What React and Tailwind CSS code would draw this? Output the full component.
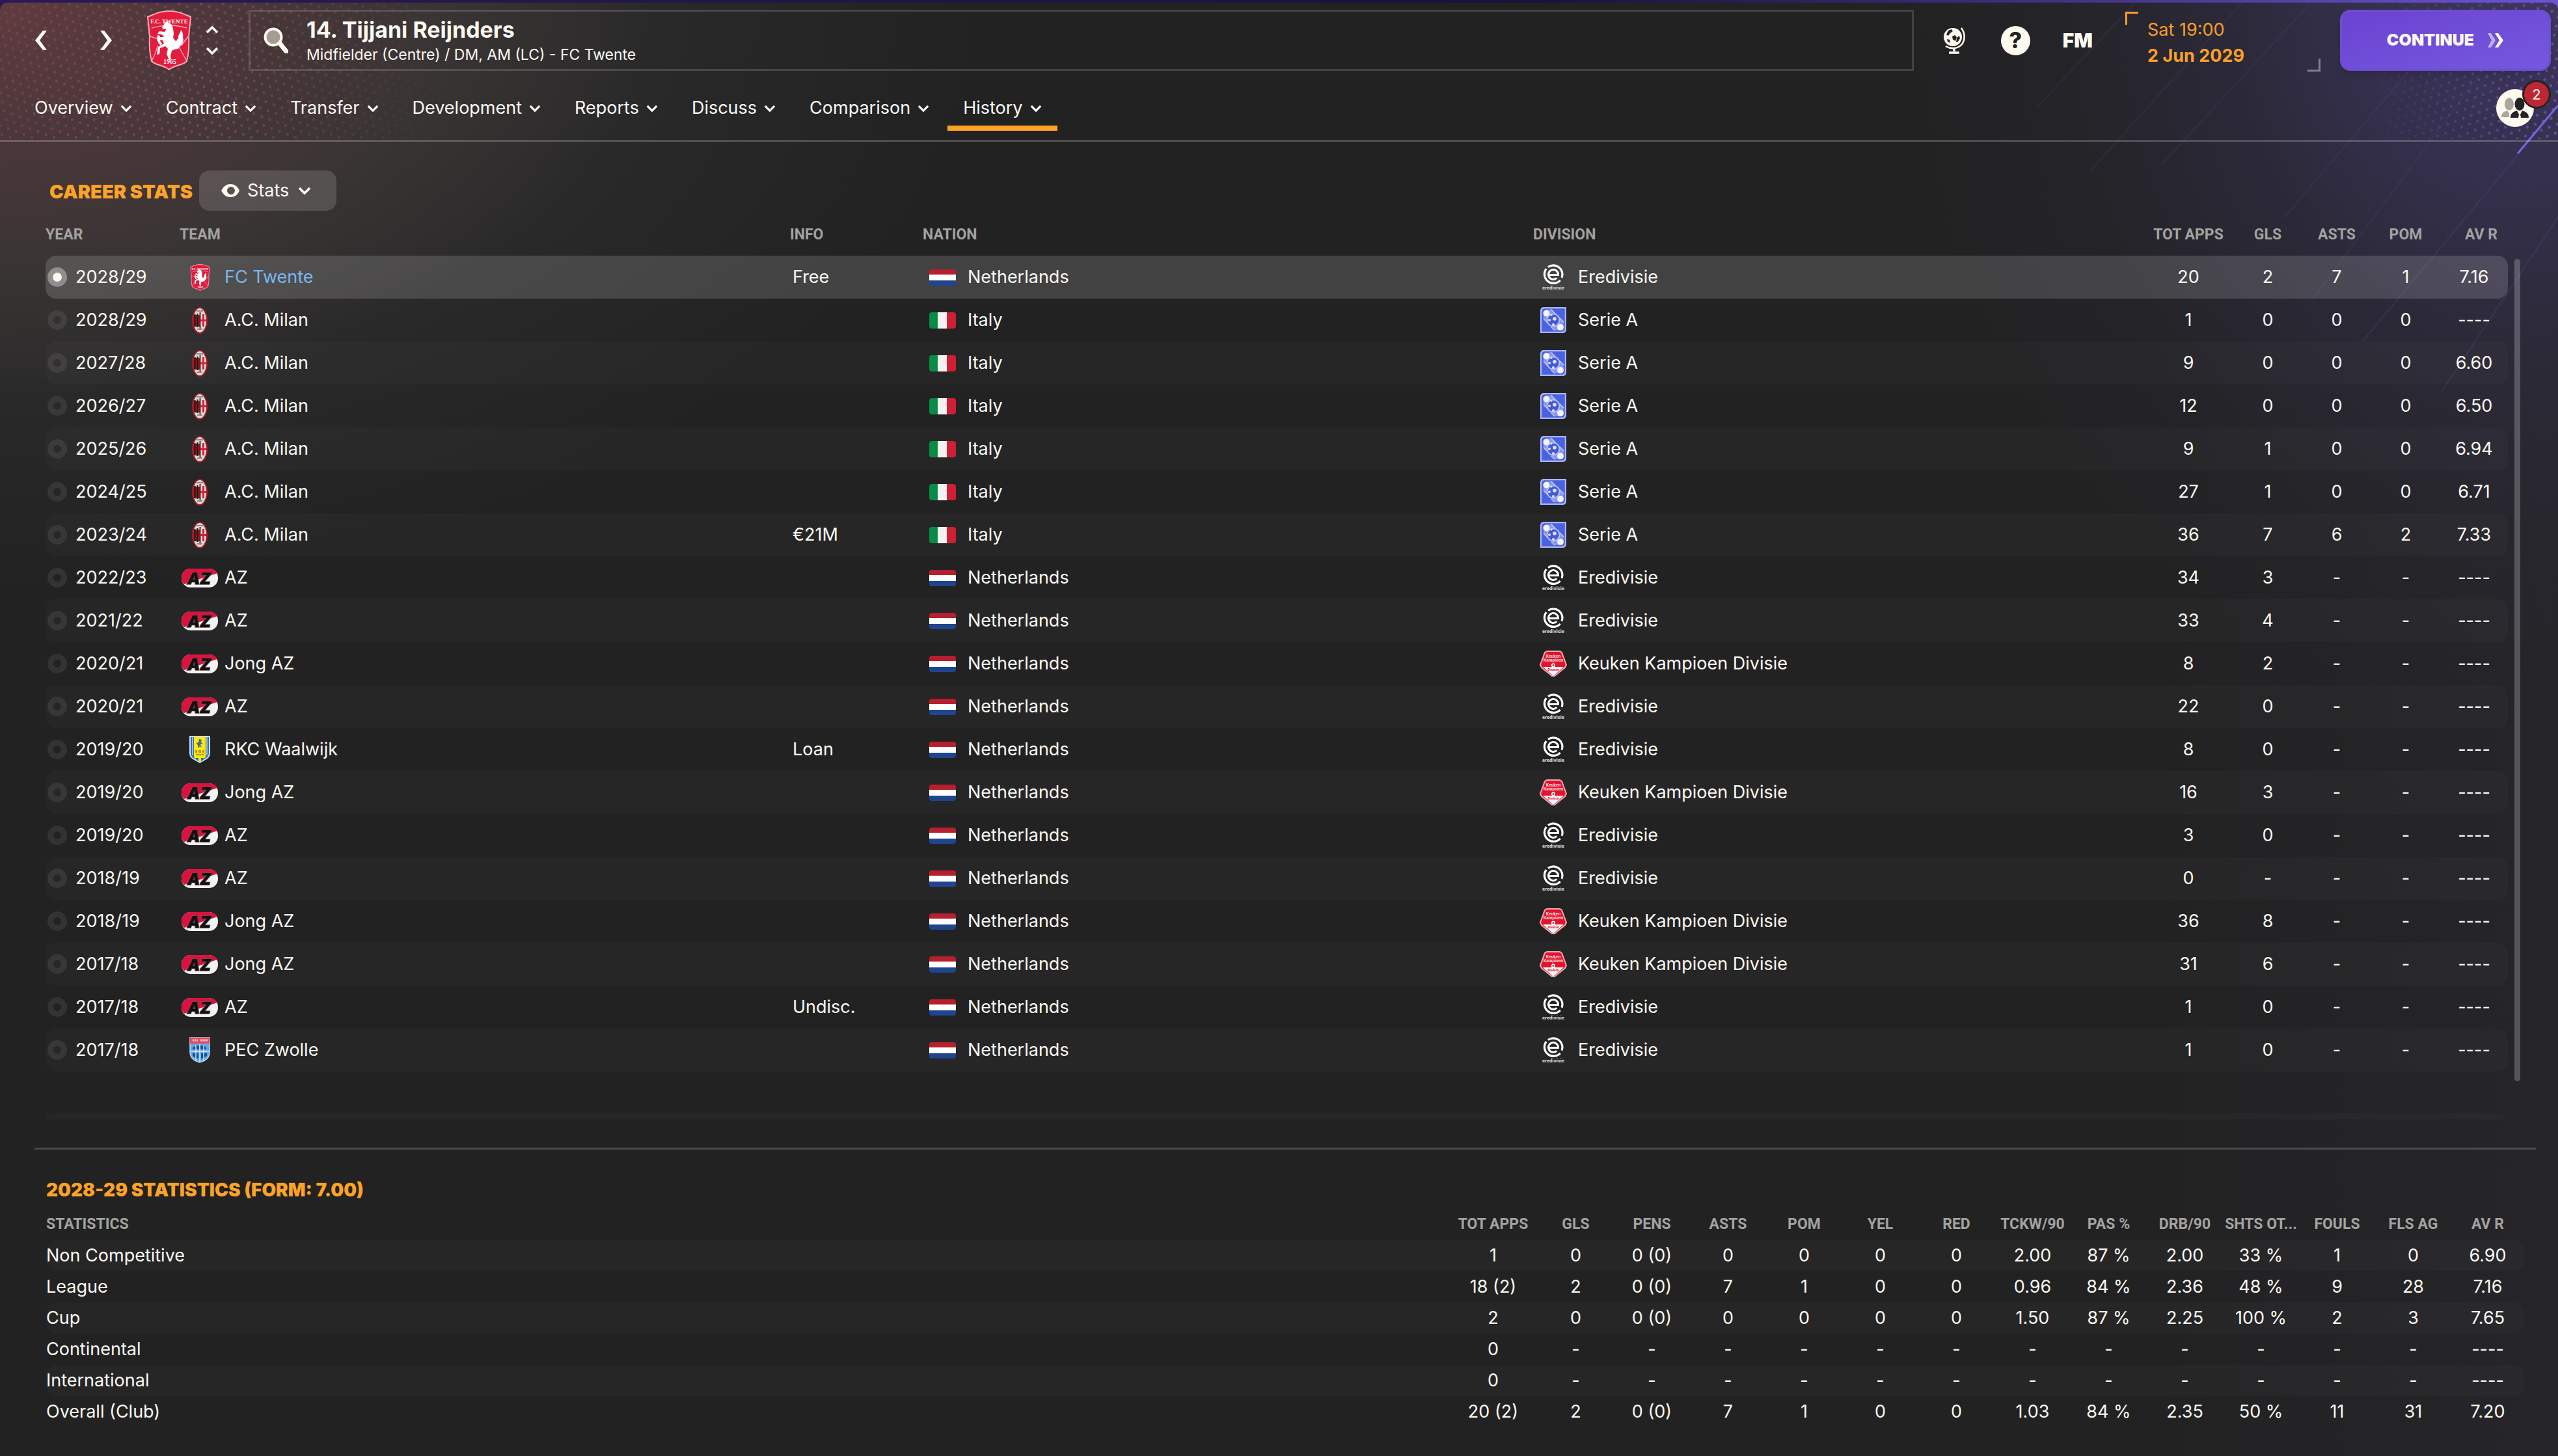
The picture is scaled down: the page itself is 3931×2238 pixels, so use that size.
import { useState } from 'react';

const CAREER = [
  { year: '2028/29', team: 'FC Twente', club: 'twente', info: 'Free', nation: 'Netherlands', division: 'Eredivisie', stats: ['20', '2', '7', '1', '7.16'] },
  { year: '2028/29', team: 'A.C. Milan', club: 'milan', info: '', nation: 'Italy', division: 'Serie A', stats: ['1', '0', '0', '0', '----'] },
  { year: '2027/28', team: 'A.C. Milan', club: 'milan', info: '', nation: 'Italy', division: 'Serie A', stats: ['9', '0', '0', '0', '6.60'] },
  { year: '2026/27', team: 'A.C. Milan', club: 'milan', info: '', nation: 'Italy', division: 'Serie A', stats: ['12', '0', '0', '0', '6.50'] },
  { year: '2025/26', team: 'A.C. Milan', club: 'milan', info: '', nation: 'Italy', division: 'Serie A', stats: ['9', '1', '0', '0', '6.94'] },
  { year: '2024/25', team: 'A.C. Milan', club: 'milan', info: '', nation: 'Italy', division: 'Serie A', stats: ['27', '1', '0', '0', '6.71'] },
  { year: '2023/24', team: 'A.C. Milan', club: 'milan', info: '€21M', nation: 'Italy', division: 'Serie A', stats: ['36', '7', '6', '2', '7.33'] },
  { year: '2022/23', team: 'AZ', club: 'az', info: '', nation: 'Netherlands', division: 'Eredivisie', stats: ['34', '3', '-', '-', '----'] },
  { year: '2021/22', team: 'AZ', club: 'az', info: '', nation: 'Netherlands', division: 'Eredivisie', stats: ['33', '4', '-', '-', '----'] },
  { year: '2020/21', team: 'Jong AZ', club: 'az', info: '', nation: 'Netherlands', division: 'Keuken Kampioen Divisie', stats: ['8', '2', '-', '-', '----'] },
  { year: '2020/21', team: 'AZ', club: 'az', info: '', nation: 'Netherlands', division: 'Eredivisie', stats: ['22', '0', '-', '-', '----'] },
  { year: '2019/20', team: 'RKC Waalwijk', club: 'rkc', info: 'Loan', nation: 'Netherlands', division: 'Eredivisie', stats: ['8', '0', '-', '-', '----'] },
  { year: '2019/20', team: 'Jong AZ', club: 'az', info: '', nation: 'Netherlands', division: 'Keuken Kampioen Divisie', stats: ['16', '3', '-', '-', '----'] },
  { year: '2019/20', team: 'AZ', club: 'az', info: '', nation: 'Netherlands', division: 'Eredivisie', stats: ['3', '0', '-', '-', '----'] },
  { year: '2018/19', team: 'AZ', club: 'az', info: '', nation: 'Netherlands', division: 'Eredivisie', stats: ['0', '-', '-', '-', '----'] },
  { year: '2018/19', team: 'Jong AZ', club: 'az', info: '', nation: 'Netherlands', division: 'Keuken Kampioen Divisie', stats: ['36', '8', '-', '-', '----'] },
  { year: '2017/18', team: 'Jong AZ', club: 'az', info: '', nation: 'Netherlands', division: 'Keuken Kampioen Divisie', stats: ['31', '6', '-', '-', '----'] },
  { year: '2017/18', team: 'AZ', club: 'az', info: 'Undisc.', nation: 'Netherlands', division: 'Eredivisie', stats: ['1', '0', '-', '-', '----'] },
  { year: '2017/18', team: 'PEC Zwolle', club: 'pec', info: '', nation: 'Netherlands', division: 'Eredivisie', stats: ['1', '0', '-', '-', '----'] },
];

const SEASON_COLS = ['TOT APPS', 'GLS', 'PENS', 'ASTS', 'POM', 'YEL', 'RED', 'TCKW/90', 'PAS %', 'DRB/90', 'SHTS OT...', 'FOULS', 'FLS AG', 'AV R'];

const SEASON = [
  ['Non Competitive', '1', '0', '0 (0)', '0', '0', '0', '0', '2.00', '87 %', '2.00', '33 %', '1', '0', '6.90'],
  ['League', '18 (2)', '2', '0 (0)', '7', '1', '0', '0', '0.96', '84 %', '2.36', '48 %', '9', '28', '7.16'],
  ['Cup', '2', '0', '0 (0)', '0', '0', '0', '0', '1.50', '87 %', '2.25', '100 %', '2', '3', '7.65'],
  ['Continental', '0', '-', '-', '-', '-', '-', '-', '-', '-', '-', '-', '-', '-', '----'],
  ['International', '0', '-', '-', '-', '-', '-', '-', '-', '-', '-', '-', '-', '-', '----'],
  ['Overall (Club)', '20 (2)', '2', '0 (0)', '7', '1', '0', '0', '1.03', '84 %', '2.35', '50 %', '11', '31', '7.20'],
];

const TABS = ['Overview', 'Contract', 'Transfer', 'Development', 'Reports', 'Discuss', 'Comparison', 'History'];

/* ---------- small icons ---------- */

function Chevron({ className }) {
  return (
    <svg viewBox="0 0 20 12" className={className} fill="none" stroke="currentColor" strokeWidth="3.6">
      <path d="M2 2l8 8 8-8" />
    </svg>
  );
}

function Arrow({ className }) {
  return (
    <svg viewBox="0 0 20 30" className={className} fill="currentColor">
      <path d="M13 0h6L8 15l11 15h-6L1 15z" />
    </svg>
  );
}

function SearchIcon() {
  return (
    <svg viewBox="0 0 38 40" className="h-10 w-[38px]">
      <circle cx="15" cy="15" r="12.5" fill="#a39d95" stroke="#fffaf0" strokeWidth="4" />
      <path d="M26 26l9 11" stroke="#fffaf0" strokeWidth="7" strokeLinecap="round" />
    </svg>
  );
}

function GlobeIcon() {
  return (
    <svg viewBox="0 0 35 42" className="h-[42px] w-[35px]">
      <circle cx="15" cy="16" r="14" fill="#fffaf0" />
      <path d="M8 6l5-2 2 3-4 3-3 4-3-2zM14 15l4-2 3 3-2 6-4-2zM21 17l4-3 1 4-3 5-3 1zM6 19l4 1 1 5-4-2z" fill="#232324" />
      <path d="M28 2c6 8 6 18 1 25-6 7-17 8-25 3" fill="none" stroke="#fffaf0" strokeWidth="2.6" />
      <path d="M17 32v6M9 40h16" stroke="#fffaf0" strokeWidth="3.4" />
    </svg>
  );
}

function PeopleIcon() {
  return (
    <svg viewBox="0 0 44 32" className="h-8 w-11">
      <g fill="#aca69c">
        <ellipse cx="13" cy="10" rx="7" ry="9.5" />
        <path d="M1 30c0-6 4-9 9-10l3 4v6z" />
      </g>
      <g fill="#232324">
        <ellipse cx="29" cy="10" rx="7.5" ry="10" />
        <path d="M15 31c0-7 4-9 10-11l3 6-1 5zM43 31c0-7-4-9-10-11l-3 6 1 5z" />
      </g>
    </svg>
  );
}

function EyeIcon() {
  return (
    <svg viewBox="0 0 28 20" className="h-5 w-7">
      <path fillRule="evenodd" fill="#fffaf0" d="M0 10C4 3 8 0 14 0s11 3 14 10c-3 7-8 10-14 10S4 17 0 10zm15-6a6 6 0 1 0 0 12 6 6 0 0 0 0-12z" />
    </svg>
  );
}

/* ---------- club crests ---------- */

function TwenteCrest({ className }) {
  return (
    <svg viewBox="0 0 70 92" className={className}>
      <path d="M2 10C14 5 22 1 35 1s21 4 33 9l-3 30c1 16 0 26-3 38-6 7-20 6-27 13C28 84 14 85 8 78 5 66 4 56 5 40z" fill="#e31b3c" stroke="#f5aab6" strokeWidth="2" />
      <path d="M8 27c17-5 37-5 54 0M8 78c4-8 8-16 9-24M62 78c-4-8-8-14-12-22M6 40l12 4M64 40l-10 14" fill="none" stroke="#f5aab6" strokeWidth="1.4" />
      <text x="35" y="20" textAnchor="middle" fontSize="9" fontWeight="700" fontFamily="Liberation Serif, serif" fill="#fff">F.C. TWENTE</text>
      <text x="36" y="82" textAnchor="middle" fontSize="10" fontWeight="700" fontFamily="Liberation Serif, serif" fill="#fff">1965</text>
      <path d="M36 20l3 2 2 6 1 8-1 6 4 5 5 1 2 6-3 5-6 1-4 2-2 8 1 5-3 1-4-9 2-8-4-4-8 3-1 9-4 1 2-12 9-5-2-5-8-1 2-4 8 0-3-4-7-1 3-4 8 1 3-5-5 1-2-3 6-9z" fill="#fff" />
      <path d="M48 57c8-3 10-10 8-16 1-6-1-8-3-11-1 6-5 8-4 13-4 3-5 8-1 14zM17 38c-2 6 0 12 5 16l2-3c-3-3-4-7-3-12z" fill="#fff" />
    </svg>
  );
}

function MilanCrest() {
  return (
    <svg viewBox="0 0 24 41" className="h-[41px] w-6">
      <ellipse cx="12" cy="20.5" rx="11" ry="19.5" fill="#dcdad7" stroke="#a81d29" strokeWidth="2" />
      <path d="M3 12h9v18H3c-2-6-2-12 0-18z" fill="#a01722" />
      <path d="M4.500 11v19M8.500 10v21" stroke="#1b1416" strokeWidth="2" />
      <path d="M12.500 8v25" stroke="#3b2326" strokeWidth="1.8" />
      <path d="M17.500 11v19M13 20.500h9" stroke="#dc1f30" strokeWidth="3" />
      <path d="M7 6h10M8 34h8" stroke="#8c8886" strokeWidth="2" />
    </svg>
  );
}

function AzCrest() {
  return (
    <svg viewBox="0 0 56 29" className="h-[29px] w-14">
      <rect x="0" y="0" width="56" height="29" rx="14" fill="#f4f1f1" />
      <path d="M14 0h28c6 0 11 3 13 7L4 24C1 21 0 18 0 14 0 6 6 0 14 0z" fill="#d9123f" />
      <text x="27" y="24" textAnchor="middle" fontSize="24" fontWeight="900" fontStyle="italic" fontFamily="Inter, sans-serif" fill="#111" stroke="#6b4a4a" strokeWidth="1.5" paintOrder="stroke">AZ</text>
    </svg>
  );
}

function RkcCrest() {
  return (
    <svg viewBox="0 0 32 42" className="h-[42px] w-8">
      <path d="M1 1h30v26c0 8-8 9-15 14C9 36 1 35 1 27z" fill="#2f6db5" stroke="#cfe0ea" strokeWidth="2" />
      <path d="M5 2v28M27 2v28" stroke="#e5eef2" strokeWidth="1.2" />
      <path d="M7 2h18v31l-9 7-9-7z" fill="#ffe80f" />
      <path d="M15 5l4 1-1 4 3 2-4 1 2 5-3-2-3 3 0-5-3-2 4-2z" fill="#4c6a8e" />
      <path d="M9 22h3v4H9zM14 22h4v4h-4zM20 22h3v4h-3z" fill="#a89b3a" />
      <path d="M10 29h12" stroke="#b8a620" strokeWidth="2.4" />
      <path d="M10 34h4v5l-4-3zM18 34h4l0 2-4 3z" fill="#2f6db5" />
    </svg>
  );
}

function PecCrest() {
  return (
    <svg viewBox="0 0 32 40" className="h-10 w-8">
      <path d="M1 1h30v22c0 9-7 14-15 16C8 37 1 32 1 23z" fill="#5aa9ea" stroke="#b9d9ee" strokeWidth="1.5" />
      <path d="M1 1h30v9H1z" fill="#ea4a5e" />
      <path d="M5 5h9M17 5h11" stroke="#f9c7cd" strokeWidth="3" strokeDasharray="2 1" />
      <path d="M11 13h4v6H5v-3zM17 13h5l4 3v3h-9zM5 25h9v8h-3l-6-4zM18 25h9v4l-6 4h-3z" fill="#1d4f94" />
      <path d="M16 11v27M2 22h28M10 12v24M22 12v24" stroke="#dcecf8" strokeWidth="1.4" />
    </svg>
  );
}

function ClubCrest({ club }) {
  if (club === 'twente') return <TwenteCrest className="h-[41px] w-[33px]" />;
  if (club === 'milan') return <MilanCrest />;
  if (club === 'az') return <AzCrest />;
  if (club === 'rkc') return <RkcCrest />;
  return <PecCrest />;
}

/* ---------- flags and competition logos ---------- */

function Flag({ nation }) {
  if (nation === 'Italy') {
    return (
      <svg viewBox="0 0 41 25" className="h-[25px] w-[41px] rounded">
        <path d="M0 0h13v25H0z" fill="#078b47" />
        <path d="M13 0h14v25H13z" fill="#f4f2f0" />
        <path d="M27 0h14v25H27z" fill="#cd2034" />
      </svg>
    );
  }
  return (
    <svg viewBox="0 0 41 25" className="h-[25px] w-[41px] rounded">
      <path d="M0 0h41v8H0z" fill="#b51f2e" />
      <path d="M0 8h41v9H0z" fill="#fff" />
      <path d="M0 17h41v8H0z" fill="#1f458f" />
    </svg>
  );
}

function DivisionLogo({ division }) {
  if (division === 'Eredivisie') {
    return (
      <svg viewBox="0 0 38 42" className="h-[42px] w-[38px]" fill="none" stroke="#fff">
        <path d="M11 5.500A14 14 0 0 1 32.200 21.800M29.700 26A14 14 0 0 1 8.300 8" strokeWidth="3.2" />
        <path d="M13 17.500h13.500A7.500 7.500 0 1 0 24.300 22.300" strokeWidth="3" />
        <text x="19" y="40" textAnchor="middle" fontSize="7" fontWeight="800" fontFamily="Inter, sans-serif" fill="#cfcfcf" stroke="none">eredivisie</text>
      </svg>
    );
  }
  if (division === 'Serie A') {
    return (
      <svg viewBox="0 0 40 40" className="size-10">
        <path d="M7 1h32v32c0 4-2 6-6 6H1V7c0-4 2-6 6-6z" fill="#4a62e0" stroke="#a9b4f3" strokeWidth="2.5" />
        <path d="M5 6l12-3 19 19-1 13-12 1L5 18z" fill="#8b99ec" />
        <circle cx="9.5" cy="9.5" r="5" fill="#f3f5fb" />
        <circle cx="31" cy="31" r="5" fill="#f3f5fb" />
        <circle cx="20" cy="20" r="9.5" fill="#4459d6" stroke="#b4bef6" strokeWidth="2" />
        <circle cx="22" cy="18" r="2.8" fill="#dfe4fc" />
        <circle cx="14" cy="20" r="2" fill="#dfe4fc" />
        <circle cx="20" cy="27" r="2" fill="#dfe4fc" />
        <circle cx="17" cy="12" r="1.6" fill="#dfe4fc" />
        <path d="M17 4l6 6M30 17l6 6M5 18l6 6M17 31l5 5" stroke="#c7cff8" strokeWidth="1.4" />
      </svg>
    );
  }
  return (
    <svg viewBox="0 0 42 41" className="h-[41px] w-[42px]">
      <path d="M11 1h20l3 2 7 19-2 4-16 13h-4L3 26l-2-4L8 3z" fill="#e2132d" stroke="#e9a9b0" strokeWidth="2" />
      <path d="M5 25h32L22 38h-2z" fill="#fff" />
      <text x="21" y="11" textAnchor="middle" fontSize="6" fontWeight="800" fontFamily="Inter, sans-serif" fill="#fbd0d5">Keuken</text>
      <text x="21" y="17" textAnchor="middle" fontSize="6" fontWeight="800" fontFamily="Inter, sans-serif" fill="#fbd0d5">Kampioen</text>
      <text x="21" y="31" textAnchor="middle" fontSize="5" fontWeight="800" fontFamily="Inter, sans-serif" fill="#e2132d">Divisie</text>
      <circle cx="21" cy="22.5" r="3" fill="#fff" />
      <circle cx="21" cy="22.5" r="1.5" fill="#4d6b58" />
    </svg>
  );
}

/* ---------- backdrop: club colour glow left, purple glow right ---------- */

function Backdrop() {
  return (
    <div aria-hidden="true" className="pointer-events-none absolute inset-0 overflow-hidden">
      <div className="absolute left-0 top-0 h-[900px] w-[1500px] bg-[radial-gradient(farthest-side_at_0%_0%,#603b3fff_0%,#523a3de0_22%,#48403f99_46%,#38363655_68%,#22222300_100%)]" />
      <div className="absolute right-0 top-0 h-[1100px] w-[1000px] bg-[radial-gradient(farthest-side_at_100%_0%,#493d78ff_0%,#3d3560f0_22%,#2f2c42b0_50%,#28273066_76%,#22222300_100%)]" />
      <div className="absolute bottom-0 right-0 h-full w-[600px] bg-linear-to-l from-[#2c2a3460] to-[#22222300]" />
      <svg className="absolute left-0 top-0 h-[210px] w-[700px]">
        <defs>
          <pattern id="dotsL" width="22" height="14" patternUnits="userSpaceOnUse" patternTransform="rotate(-12)">
            <circle cx="5" cy="3" r="2.2" fill="#8d5266" />
            <circle cx="16" cy="10" r="2.2" fill="#8d5266" />
          </pattern>
          <linearGradient id="fadeL" x1="0" y1="0" x2="1" y2="0">
            <stop offset="0" stopColor="#fff" stopOpacity="0.4" />
            <stop offset="0.45" stopColor="#fff" stopOpacity="0.6" />
            <stop offset="1" stopColor="#fff" stopOpacity="0" />
          </linearGradient>
          <mask id="maskL"><rect width="700" height="210" fill="url(#fadeL)" /></mask>
        </defs>
        <rect width="700" height="210" fill="url(#dotsL)" mask="url(#maskL)" />
      </svg>
      <svg className="absolute right-0 top-0 h-[640px] w-[900px]" viewBox="0 0 900 640">
        <defs>
          <pattern id="dotsR" width="22" height="14" patternUnits="userSpaceOnUse" patternTransform="rotate(12)">
            <circle cx="5" cy="3" r="2.2" fill="#6a57c4" />
            <circle cx="16" cy="10" r="2.2" fill="#6a57c4" />
          </pattern>
          <linearGradient id="fadeR" x1="0" y1="0" x2="1" y2="0">
            <stop offset="0" stopColor="#fff" stopOpacity="0" />
            <stop offset="1" stopColor="#fff" stopOpacity="0.8" />
          </linearGradient>
          <mask id="maskR"><rect x="600" width="300" height="210" fill="url(#fadeR)" /></mask>
        </defs>
        <rect x="600" width="300" height="210" fill="url(#dotsR)" mask="url(#maskR)" />
        <g stroke="#6353b5" strokeWidth="2" fill="none">
          <path d="M250 0L100 160M415 0L180 260M520 0L290 250M700 70L480 330M780 110L520 460" opacity="0.14" />
          <path d="M900 160L600 520M900 330L720 600" opacity="0.22" />
          <path d="M900 158L838 232" stroke="#7a63e0" strokeWidth="3" />
        </g>
      </svg>
    </div>
  );
}

function Header() {
  return (
    <header className="relative border-b-3 border-white/20">
      <div className="flex items-stretch pl-[53px] pr-[11px] pt-[11px]">
        <div className="flex items-center">
          <button aria-label="Back"><Arrow className="h-[30px] w-5" /></button>
          <button aria-label="Forward" className="ml-20 mr-[52px]"><Arrow className="h-[30px] w-5 -scale-x-100" /></button>
          <TwenteCrest className="h-[92px] w-[70px]" />
          <div className="ml-5 mr-[45px] flex flex-col gap-5">
            <button aria-label="Previous player"><Chevron className="h-3 w-[22px] -scale-y-100" /></button>
            <button aria-label="Next player"><Chevron className="h-3 w-[22px]" /></button>
          </div>
        </div>

        <div className="flex flex-1 items-center gap-7 border-3 border-white/15 pl-5">
          <button aria-label="Search"><SearchIcon /></button>
          <div className="pt-1">
            <h1 className="text-[34px] leading-10 font-bold">14. Tijjani Reijnders</h1>
            <p className="text-[23px] leading-9">Midfielder (Centre) / DM, AM (LC) - FC Twente</p>
          </div>
        </div>

        <div className="flex items-center pl-[45px]">
          <button aria-label="World"><GlobeIcon /></button>
          <button aria-label="Help" className="ml-[54px] flex size-[45px] items-center justify-center rounded-full bg-[#fffaf0] text-[34px] leading-none font-extrabold text-[#232324]">?</button>
          <button className="ml-[50px] text-[30px] font-black">FM</button>
          <div className="relative ml-[50px] mr-[30px] w-[300px] pl-[34px] pt-2 text-[27px] leading-10 text-[#fba02a]">
            <span className="absolute left-0 top-0 size-5 border-l-3 border-t-3 border-[#fba02a]" />
            <p>Sat 19:00</p>
            <p className="font-bold">2 Jun 2029</p>
            <span className="absolute -bottom-1 right-0 size-5 border-b-3 border-r-3 border-white/40" />
          </div>
          <button className="flex h-[94px] w-[324px] items-center justify-center gap-5 rounded-2xl border-3 border-[#6a50cf] bg-linear-to-br from-[#6a43d0] to-[#7657e0] text-[25px] font-black shadow-lg">
            CONTINUE
            <svg viewBox="0 0 26 22" className="h-[22px] w-[26px]">
              <path d="M1 0h5l7 11-7 11H1l6-11z" fill="#b9b4f0" />
              <path d="M12 0h5l8 11-8 11h-5l7-11z" fill="#fffaf0" />
            </svg>
          </button>
        </div>
      </div>

      <div className="flex items-center justify-between pb-[14px] pl-[29px] pr-[37px] pt-[22px]">
        <nav className="flex gap-1">
          {TABS.map((tab) => (
            <a
              key={tab}
              href={`#${tab.toLowerCase()}`}
              className={`flex h-[70px] items-center gap-[11px] border-y-8 border-t-transparent px-6 text-[27px] ${tab === 'History' ? 'border-b-[#fca326]' : 'border-b-transparent'}`}
            >
              {tab}
              <Chevron className="h-[11px] w-[18px]" />
            </a>
          ))}
        </nav>
        <button aria-label="Social" className="relative flex size-[58px] items-center justify-center rounded-full bg-[#fffaf0]">
          <PeopleIcon />
          <span className="absolute -right-[26px] -top-[14px] flex size-[44px] items-center justify-center rounded-full border-3 border-[#232324] bg-[#bc2733] text-[22px]">2</span>
        </button>
      </div>
    </header>
  );
}

function CareerTable() {
  const [selected, setSelected] = useState(0);

  return (
    <table className="w-full flex-1 table-fixed border-separate border-spacing-0 text-[27px] leading-9">
      <colgroup>
        <col className="w-[206px]" />
        <col />
        <col className="w-[204px]" />
        <col />
        <col />
        <col className="w-[138px]" />
        <col className="w-[106px]" />
        <col className="w-[106px]" />
        <col className="w-[106px]" />
        <col className="w-[104px]" />
      </colgroup>
      <thead>
        <tr className="h-[69px] text-left font-[Roboto,sans-serif] text-[23px] text-[#a3a2a0] *:pt-1 *:font-bold">
          <th>YEAR</th>
          <th>TEAM</th>
          <th>INFO</th>
          <th>NATION</th>
          <th>DIVISION</th>
          <th className="text-center">TOT APPS</th>
          <th className="text-center">GLS</th>
          <th className="text-center">ASTS</th>
          <th className="text-center">POM</th>
          <th className="pr-4 text-right">AV R</th>
        </tr>
      </thead>
      <tbody>
        {CAREER.map((row, i) => {
          const active = i === selected;
          const bg = active ? '*:bg-white/15' : i % 2 === 0 ? '*:bg-white/2' : '';
          return (
            <tr key={i} className={`h-[66px] ${bg} *:first:rounded-l-2xl *:last:rounded-r-2xl`}>
              <td>
                <label className="flex items-center gap-[13px] pl-[3px]">
                  <input
                    type="radio"
                    name="season"
                    checked={active}
                    onChange={() => setSelected(i)}
                    className="size-[30px] appearance-none rounded-full border-9 border-white/8 bg-clip-padding checked:border-8 checked:border-white/35 checked:bg-[#fffaf0]"
                  />
                  {row.year}
                </label>
              </td>
              <td>
                <div className="flex items-center gap-[7px]">
                  <span className="flex w-[62px] justify-center"><ClubCrest club={row.club} /></span>
                  <a href="#team" className={i === 0 ? 'text-[#78b7f2]' : ''}>{row.team}</a>
                </div>
              </td>
              <td className="pl-1">{row.info}</td>
              <td>
                <div className="flex items-center gap-[18px] pl-[10px]">
                  <Flag nation={row.nation} />
                  {row.nation}
                </div>
              </td>
              <td>
                <div className="flex items-center gap-[7px]">
                  <span className="flex w-[62px] justify-center"><DivisionLogo division={row.division} /></span>
                  {row.division}
                </div>
              </td>
              {row.stats.map((value, n) => (
                <td key={n} className="text-center">{value}</td>
              ))}
            </tr>
          );
        })}
      </tbody>
    </table>
  );
}

function SeasonTable() {
  return (
    <table className="w-full table-fixed border-separate border-spacing-0 text-[27px] leading-9">
      <colgroup>
        <col />
        <col className="w-[137px]" />
        <col className="w-[117px]" span="12" />
        <col className="w-[112px]" />
      </colgroup>
      <thead>
        <tr className="h-[49px] font-[Roboto,sans-serif] text-[23px] text-[#a3a2a0] *:whitespace-nowrap *:font-bold">
          <th className="text-left">STATISTICS</th>
          {SEASON_COLS.map((col) => <th key={col}>{col}</th>)}
        </tr>
      </thead>
      <tbody>
        {SEASON.map((row, i) => (
          <tr key={row[0]} className={`h-12 ${i % 2 === 0 ? '*:bg-white/2' : ''} *:first:rounded-l-2xl *:last:rounded-r-2xl`}>
            {row.map((value, n) => (
              <td key={n} className={n === 0 ? '' : 'text-center'}>{value}</td>
            ))}
          </tr>
        ))}
      </tbody>
    </table>
  );
}

export default function App() {
  return (
    <div className="min-h-screen bg-linear-to-r from-[#2a1a55] via-[#1b1038] via-60% to-[#6a55d6] pt-1 font-[Inter,sans-serif] text-[#fbf9f2]">
      <div className="relative min-h-[calc(100vh-4px)] overflow-hidden rounded-t-xl bg-[#222223]">
        <Backdrop />
        <Header />

        <main className="relative">
          <section className="pl-[70px] pr-[58px] pt-[44px]">
            <div className="flex items-center gap-[10px] pl-[6px]">
              <h2 className="pt-1 text-[29px] leading-10 font-black text-[#fca326]">CAREER STATS</h2>
              <div className="flex h-[62px] items-center gap-3 rounded-2xl bg-white/14 pl-[34px] pr-[38px]">
                <EyeIcon />
                <select aria-label="View" className="appearance-none bg-transparent text-[27px] leading-9">
                  <option>Stats</option>
                </select>
                <Chevron className="h-3 w-[22px]" />
              </div>
            </div>
            <div className="flex gap-[10px] pb-[15px]">
              <CareerTable />
              <div className="-mb-[15px] mt-[74px] w-[9px] rounded-full bg-white/22" />
            </div>
            <div className="mr-[23px] mt-[49px] h-[10px] rounded-t-xl bg-white/2" />
          </section>

          <hr className="ml-[53px] mr-[34px] mt-[43px] border-t-3 border-white/18" />

          <section className="pb-11 pl-[71px] pr-[52px] pt-[42px]">
            <h2 className="mb-2 text-[28px] leading-10 font-black text-[#fca326]">2028-29 STATISTICS (FORM: 7.00)</h2>
            <SeasonTable />
          </section>
        </main>
      </div>
    </div>
  );
}
